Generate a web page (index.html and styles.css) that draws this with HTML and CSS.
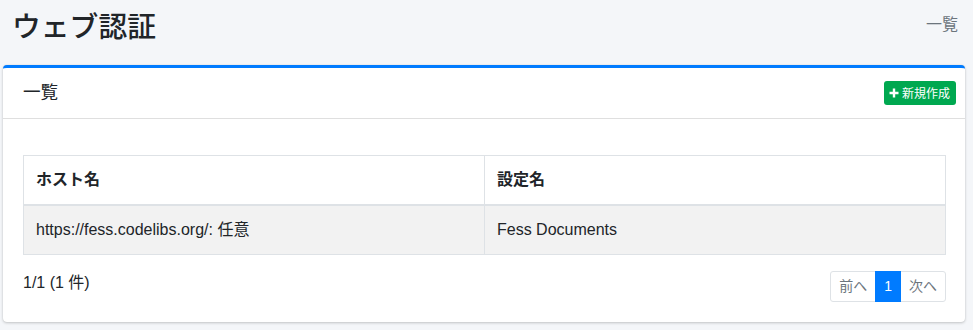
FILE: index.html
```html
<!DOCTYPE html>
<html lang="ja">
<head>
<meta charset="utf-8">
<title>ウェブ認証</title>
<link rel="stylesheet" href="styles.css">
</head>
<body>
<div class="content-header">
  <h1 class="page-title">ウェブ認証</h1>
  <div class="breadcrumb">一覧</div>
</div>
<div class="card">
  <div class="card-header">
    <h3 class="card-title">一覧</h3>
    <a class="btn-new" href="#"><svg class="plus" viewBox="0 0 10 10" width="10" height="10"><path d="M5 0.5v9M0.5 5h9" stroke="#fff" stroke-width="2.4"/></svg>新規作成</a>
  </div>
  <div class="card-body">
    <table class="table">
      <thead>
        <tr><th>ホスト名</th><th>設定名</th></tr>
      </thead>
      <tbody>
        <tr><td>https://fess.codelibs.org/: 任意</td><td>Fess Documents</td></tr>
      </tbody>
    </table>
    <div class="footer-row">
      <span class="count">1/1 (1 件)</span>
      <ul class="pagination">
        <li class="page-link">前へ</li>
        <li class="page-link active">1</li>
        <li class="page-link">次へ</li>
      </ul>
    </div>
  </div>
</div>
</body>
</html>
```
FILE: styles.css
```css
* { box-sizing: border-box; }
html, body { margin: 0; padding: 0; }
body {
  background: #f4f6f9;
  font-family: "Liberation Sans", "Noto Sans CJK JP", sans-serif;
  font-size: 16px;
  line-height: 1.5;
  color: #212529;
  width: 973px;
  height: 330px;
  overflow: hidden;
}
.content-header {
  display: flex;
  justify-content: space-between;
  align-items: flex-start;
  padding: 4px 15px 0 12px;
  height: 65px;
}
.page-title {
  margin: 0;
  font-family: "Noto Sans CJK JP", sans-serif;
  font-size: 28.8px;
  font-weight: 500;
  line-height: 42px;
}
.breadcrumb {
  font-family: "Noto Sans CJK JP", sans-serif;
  color: #6c757d;
  font-size: 16px;
  line-height: 24px;
  margin-top: 7px;
}
.card {
  margin: 0 8px 0 3px;
  background: #fff;
  border-top: 3px solid #007bff;
  border-radius: 4px;
  box-shadow: 0 0 1px rgba(0,0,0,.125), 0 1px 3px rgba(0,0,0,.2);
}
.card-header {
  display: flex;
  justify-content: space-between;
  align-items: center;
  padding: 10px 9px 12px 20px;
  border-bottom: 1px solid rgba(0,0,0,.125);
  height: 51px;
}
.card-title {
  margin: 0;
  font-family: "Noto Sans CJK JP", sans-serif;
  font-size: 17.6px;
  font-weight: 400;
  line-height: 26px;
  align-self: flex-start;
}
.btn-new {
  display: inline-flex;
  align-items: center;
  gap: 3px;
  background: #00a850;
  color: #fff;
  text-decoration: none;
  font-family: "Noto Sans CJK JP", sans-serif;
  font-size: 12px;
  line-height: 22px;
  padding: 1px 6px 1px 5px;
  border-radius: 3px;
  height: 24px;
  margin-top: 3px;
  align-self: flex-start;
}
.card-body {
  padding: 36px 19px 20px 20px;
}
.table {
  width: 100%;
  border-collapse: collapse;
  margin-bottom: 16px;
  table-layout: fixed;
}
.table th, .table td {
  border: 1px solid #dee2e6;
  padding: 12px;
  text-align: left;
  line-height: 24px;
  vertical-align: top;
}
.table th {
  font-weight: 700;
  border-bottom: 2px solid #dee2e6;
}
.table tbody tr { background: #f2f2f2; }
.footer-row {
  display: flex;
  justify-content: space-between;
  align-items: flex-start;
}
.count { line-height: 24px; padding-top: 0; }
.pagination {
  display: flex;
  list-style: none;
  margin: 0;
  padding: 0;
}
.page-link {
  font-family: "Liberation Sans", "Noto Sans CJK JP", sans-serif;
  font-size: 14px;
  line-height: 21px;
  padding: 4px 8px;
  color: #6c757d;
  border: 1px solid #dee2e6;
  margin-left: -1px;
  background: #fff;
}
.page-link:first-child { border-radius: 3px 0 0 3px; margin-left: 0; }
.page-link:last-child { border-radius: 0 3px 3px 0; }
.page-link.active { background: #007bff; border-color: #007bff; color: #fff; position: relative; z-index: 1; }
```
